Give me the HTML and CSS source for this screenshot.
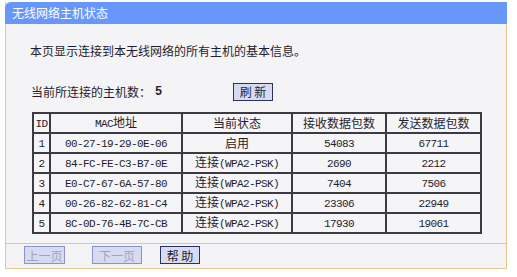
FILE: index.html
```html
<!DOCTYPE html>
<html lang="zh-CN">
<head>
    <meta charset="UTF-8">
    <title>无线网络主机状态</title>
    <link rel="stylesheet" href="styles.css">
</head>
<body>
    <div class="panel">
        <div class="panel-title">无线网络主机状态</div>
        <div class="panel-body">
            <div class="info">本页显示连接到本无线网络的所有主机的基本信息。</div>
            <div class="count-row">
                <span class="count-label">当前所连接的主机数：</span>
                <span class="count-num">5</span>
                <button class="btn btn-refresh">刷 新</button>
            </div>
            <table class="host-table">
                <colgroup>
                    <col class="c-id">
                    <col class="c-mac">
                    <col class="c-state">
                    <col class="c-rx">
                    <col class="c-tx">
                </colgroup>
                <tr>
                    <th><span class="mono">ID</span></th>
                    <th><span class="mono">MAC</span>地址</th>
                    <th>当前状态</th>
                    <th>接收数据包数</th>
                    <th>发送数据包数</th>
                </tr>
                <tr>
                    <td><span class="mono">1</span></td>
                    <td><span class="mono">00-27-19-29-0E-06</span></td>
                    <td>启用</td>
                    <td><span class="mono">54083</span></td>
                    <td><span class="mono">67711</span></td>
                </tr>
                <tr>
                    <td><span class="mono">2</span></td>
                    <td><span class="mono">84-FC-FE-C3-B7-0E</span></td>
                    <td>连接<span class="mono">(WPA2-PSK)</span></td>
                    <td><span class="mono">2690</span></td>
                    <td><span class="mono">2212</span></td>
                </tr>
                <tr>
                    <td><span class="mono">3</span></td>
                    <td><span class="mono">E0-C7-67-6A-57-80</span></td>
                    <td>连接<span class="mono">(WPA2-PSK)</span></td>
                    <td><span class="mono">7404</span></td>
                    <td><span class="mono">7506</span></td>
                </tr>
                <tr>
                    <td><span class="mono">4</span></td>
                    <td><span class="mono">00-26-82-62-81-C4</span></td>
                    <td>连接<span class="mono">(WPA2-PSK)</span></td>
                    <td><span class="mono">23306</span></td>
                    <td><span class="mono">22949</span></td>
                </tr>
                <tr>
                    <td><span class="mono">5</span></td>
                    <td><span class="mono">8C-0D-76-4B-7C-CB</span></td>
                    <td>连接<span class="mono">(WPA2-PSK)</span></td>
                    <td><span class="mono">17930</span></td>
                    <td><span class="mono">19061</span></td>
                </tr>
            </table>
        </div>
        <div class="panel-footer">
            <button class="btn btn-off btn-prev" disabled>上一页</button>
            <button class="btn btn-off btn-next" disabled>下一页</button>
            <button class="btn btn-help">帮 助</button>
        </div>
    </div>
</body>
</html>
```

FILE: styles.css
```css
body {
    margin: 0;
    background-color: #ffffff;
    font-family: "Noto Sans CJK SC", "Liberation Sans", sans-serif;
    font-size: 12px;
    color: #1e1e2c;
}
.panel {
    margin: 2px 0 0 5px;
    width: 500px;
    height: 266px;
    background-color: #f4f3f6;
    border-left: 1px solid #e6c58f;
    border-right: 1px solid #e6c58f;
    border-bottom: 1px solid #e6c58f;
    display: flex;
    flex-direction: column;
}
.panel-title {
    height: 22px;
    line-height: 21px;
    margin: 0 -1px;
    padding-left: 7px;
    background-color: #6797fb;
    color: #ffffff;
    font-size: 12px;
    border-top-left-radius: 6px;
}
.panel-body {
    height: 219px;
    padding-left: 24px;
    box-sizing: border-box;
}
.info {
    margin-top: 20px;
    height: 14px;
    line-height: 14px;
}
.count-row {
    display: flex;
    align-items: center;
    margin-top: 24px;
    height: 19px;
    padding-left: 1px;
}
.count-label {
    width: 124px;
}
.count-num {
    width: 78px;
    font-family: "Liberation Mono", monospace;
    font-weight: bold;
    font-size: 12px;
}
.btn {
    height: 18px;
    padding: 0;
    font-family: "Noto Sans CJK SC", sans-serif;
    font-size: 12px;
    line-height: 15px;
    background-color: #d7dbf2;
    color: #1e1e2c;
    border: 1px solid #2b3163;
    border-radius: 0;
}
.btn-refresh {
    width: 40px;
}
.host-table {
    margin-top: 11px;
    margin-left: 2px;
    width: 448px;
    table-layout: fixed;
    border-collapse: collapse;
    background-color: #f5f4f7;
}
.c-id { width: 17px; }
.c-mac { width: 132px; }
.c-state { width: 110px; }
.c-rx { width: 94px; }
.c-tx { width: 95px; }
.host-table th,
.host-table td {
    height: 18px;
    padding: 0;
    border: 2px solid #3d3b42;
    text-align: center;
    font-weight: normal;
    line-height: 16px;
    white-space: nowrap;
    overflow: hidden;
}
.mono {
    font-family: "Liberation Mono", "DejaVu Sans Mono", monospace;
    font-size: 11px;
    letter-spacing: -0.6px;
}
.panel-footer {
    flex: 1;
    border-top: 1px solid #e6c58f;
    display: flex;
    align-items: flex-start;
    padding: 2px 0 0 18px;
}
.btn-off {
    color: #9ea3c4;
    border-color: #8a92c8;
}
.btn-prev {
    width: 41px;
}
.btn-next {
    width: 50px;
    margin-left: 27px;
}
.btn-help {
    width: 40px;
    margin-left: 18px;
}
```
